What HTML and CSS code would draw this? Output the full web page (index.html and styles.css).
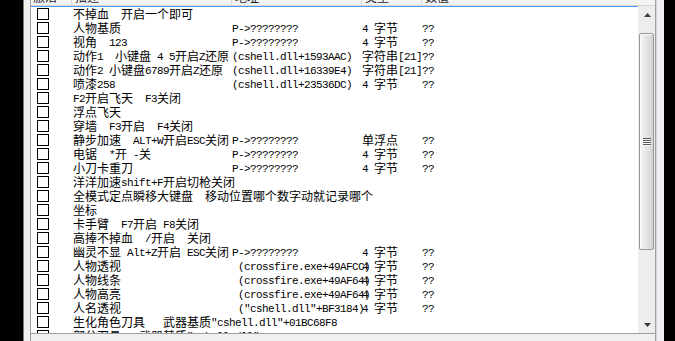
FILE: index.html
```html
<!DOCTYPE html>
<html lang="zh-CN">
<head>
<meta charset="utf-8">
<title>Cheat Table</title>
<link rel="stylesheet" href="styles.css">
</head>
<body>
<div class="screen">
  <div class="band-left"></div>
  <div class="main">
    <div class="header">
      <div class="hc hc-first"><span class="ht">激活</span></div>
      <div class="hc"><span class="ht">描述</span></div>
      <div class="hc"><span class="ht">地址</span></div>
      <div class="hc"><span class="ht">类型</span></div>
      <div class="hc hc-last"><span class="ht">数值</span></div>
    </div>
    <div class="content">
      <div class="list">
        <div class="row"><span class="cb"></span><span class="c">不掉血<span class="m">  </span>开启一个即可</span></div>
        <div class="row"><span class="cb"></span><span class="c">人物基质</span><span class="c"><span class="m">P-&gt;????????</span></span><span class="c"><span class="m">4 </span>字节</span><span class="c"><span class="m">??</span></span></div>
        <div class="row"><span class="cb"></span><span class="c">视角<span class="m">  123</span></span><span class="c"><span class="m">P-&gt;????????</span></span><span class="c"><span class="m">4 </span>字节</span><span class="c"><span class="m">??</span></span></div>
        <div class="row"><span class="cb"></span><span class="c">动作<span class="m">1  </span>小键盘<span class="m"> 4 5</span>开启<span class="m">Z</span>还原</span><span class="c"><span class="m">(cshell.dll+1593AAC)</span></span><span class="c">字符串<span class="m">[21]</span></span><span class="c"><span class="m">??</span></span></div>
        <div class="row"><span class="cb"></span><span class="c">动作<span class="m">2 </span>小键盘<span class="m">6789</span>开启<span class="m">Z</span>还原</span><span class="c"><span class="m">(cshell.dll+16339E4)</span></span><span class="c">字符串<span class="m">[21]</span></span><span class="c"><span class="m">??</span></span></div>
        <div class="row"><span class="cb"></span><span class="c">喷漆<span class="m">258</span></span><span class="c"><span class="m">(cshell.dll+23536DC)</span></span><span class="c"><span class="m">4 </span>字节</span><span class="c"><span class="m">??</span></span></div>
        <div class="row"><span class="cb"></span><span class="c"><span class="m">F2</span>开启飞天<span class="m">  F3</span>关闭</span></div>
        <div class="row"><span class="cb"></span><span class="c">浮点飞天</span></div>
        <div class="row"><span class="cb"></span><span class="c">穿墙<span class="m">  F3</span>开启<span class="m">  F4</span>关闭</span></div>
        <div class="row"><span class="cb"></span><span class="c">静步加速<span class="m">  ALT+W</span>开启<span class="m">ESC</span>关闭</span><span class="c"><span class="m">P-&gt;????????</span></span><span class="c">单浮点</span><span class="c"><span class="m">??</span></span></div>
        <div class="row"><span class="cb"></span><span class="c">电锯<span class="m">  *</span>开<span class="m"> -</span>关</span><span class="c"><span class="m">P-&gt;????????</span></span><span class="c"><span class="m">4 </span>字节</span><span class="c"><span class="m">??</span></span></div>
        <div class="row"><span class="cb"></span><span class="c">小刀卡重刀</span><span class="c"><span class="m">P-&gt;????????</span></span><span class="c"><span class="m">4 </span>字节</span><span class="c"><span class="m">??</span></span></div>
        <div class="row"><span class="cb"></span><span class="c">洋洋加速<span class="m">shift+F</span>开启切枪关闭</span></div>
        <div class="row"><span class="cb"></span><span class="c">全模式定点瞬移大键盘<span class="m">  </span>移动位置哪个数字动就记录哪个</span></div>
        <div class="row"><span class="cb"></span><span class="c">坐标</span></div>
        <div class="row"><span class="cb"></span><span class="c">卡手臂<span class="m">  F7</span>开启<span class="m"> F8</span>关闭</span></div>
        <div class="row"><span class="cb"></span><span class="c">高捧不掉血<span class="m">  /</span>开启<span class="m">  </span>关闭</span></div>
        <div class="row"><span class="cb"></span><span class="c">幽灵不显<span class="m"> Alt+Z</span>开启<span class="m"> ESC</span>关闭</span><span class="c"><span class="m">P-&gt;????????</span></span><span class="c"><span class="m">4 </span>字节</span><span class="c"><span class="m">??</span></span></div>
        <div class="row"><span class="cb"></span><span class="c">人物透视</span><span class="c"><span class="m"> (crossfire.exe+49AFCC)</span></span><span class="c"><span class="m">4 </span>字节</span><span class="c"><span class="m">??</span></span></div>
        <div class="row"><span class="cb"></span><span class="c">人物线条</span><span class="c"><span class="m"> (crossfire.exe+49AF64)</span></span><span class="c"><span class="m">4 </span>字节</span><span class="c"><span class="m">??</span></span></div>
        <div class="row"><span class="cb"></span><span class="c">人物高亮</span><span class="c"><span class="m"> (crossfire.exe+49AF64)</span></span><span class="c"><span class="m">4 </span>字节</span><span class="c"><span class="m">??</span></span></div>
        <div class="row"><span class="cb"></span><span class="c">人名透视</span><span class="c"><span class="m"> ("cshell.dll"+BF3184)</span></span><span class="c"><span class="m">4 </span>字节</span><span class="c"><span class="m">??</span></span></div>
        <div class="row"><span class="cb"></span><span class="c">生化角色刀具<span class="m">   </span>武器基质<span class="m">"cshell.dll"+01BC68F8</span></span></div>
        <div class="row"><span class="cb"></span><span class="c">部分刀具<span class="m">   </span>武器基质<span class="m">"cshell.dll"+01BC72F8</span></span></div>
      </div>
      <div class="vscroll">
        <div class="sbtn">
          <svg class="arrow" width="7" height="4" viewBox="0 0 7 4"><path d="M3.5 0L7 4H0z" fill="#3c3c3c"/></svg>
        </div>
        <div class="track">
          <div class="thumb"><span class="grip"></span></div>
        </div>
        <div class="sbtn">
          <svg class="arrow" width="7" height="4" viewBox="0 0 7 4"><path d="M0 0H7L3.5 4z" fill="#3c3c3c"/></svg>
        </div>
      </div>
    </div>
    <div class="footer"></div>
  </div>
  <div class="band-right"></div>
</div>
</body>
</html>
```

FILE: styles.css
```css
html, body {
  margin: 0;
  padding: 0;
  height: 341px;
  overflow: hidden;
  background: #000;
}

body {
  font-family: "Noto Sans CJK SC", sans-serif;
  font-size: 12px;
  color: #000;
}

.screen {
  display: flex;
  height: 341px;
  padding: 0 11px 0 23px;
  box-sizing: border-box;
}

.band-left {
  width: 8px;
  box-sizing: border-box;
  background: #f0f0f0;
  border-left: 1px solid #7c7c7c;
  border-right: 1px solid #a0a0a0;
}

.band-right {
  width: 9px;
  box-sizing: border-box;
  background: #eceef1;
  border-left: 1px solid #a0a0a0;
  box-shadow: inset 1px 0 0 #d4d4d4;
}

.main {
  width: 624px;
  display: flex;
  flex-direction: column;
  background: #f0f0f0;
}

/* column header, cut off at the top of the shot */
.header {
  height: 5px;
  border-bottom: 1px solid #d5d5d5;
  background: #f4f4f4;
  display: grid;
  grid-template-columns: 41px 160px 130px 60px 1fr;
  overflow: hidden;
}

.hc {
  border-right: 1px solid #d9d9d9;
  padding-left: 3px;
  line-height: 14px;
  white-space: nowrap;
  overflow: hidden;
}

.hc-first { padding-left: 2px; }
.hc-last { border-right: none; }

.ht {
  display: block;
  margin-top: -10px;
  color: #1b1b2a;
}

.content {
  height: 327px;
  display: flex;
}

.list {
  width: 607px;
  background: #fff;
  border-top: 1px solid #4a9df5;
  overflow: hidden;
}

.row {
  display: grid;
  grid-template-columns: 42px 159px 130px 60px 1fr;
  grid-template-rows: 14px;
  height: 14px;
  line-height: 14px;
}

.cb {
  width: 12px;
  height: 12px;
  box-sizing: border-box;
  border: 1px solid #000;
  background: #fff;
  margin: 1px 0 0 6px;
}

.c {
  white-space: pre;
}

.m {
  font-family: "Liberation Mono", monospace;
  font-size: 11px;
  letter-spacing: -0.6px;
  vertical-align: 1px;
}

/* vertical scrollbar */
.vscroll {
  width: 17px;
  display: flex;
  flex-direction: column;
  background: #ededed;
}

.sbtn {
  height: 17px;
  display: flex;
  align-items: center;
  justify-content: center;
  padding-left: 1px;
}

.arrow {
  display: block;
}

.track {
  flex: 1;
  padding: 10px 1px 0 1px;
}

.thumb {
  height: 217px;
  box-sizing: border-box;
  border: 1px solid #979797;
  border-radius: 2px;
  background: linear-gradient(to right, #f4f4f4 0%, #e8e8e8 45%, #d2d2d2 100%);
  box-shadow: inset 1px 1px 0 #fdfdfd;
  display: flex;
  align-items: center;
  justify-content: center;
}

.grip {
  display: block;
  width: 8px;
  height: 8px;
  background: repeating-linear-gradient(to bottom, #5e5e5e 0 1px, #f4f4f4 1px 2px);
}

.footer {
  flex: 1;
  border-top: 1px solid #a0a0a0;
  background: #f0f0f0;
}
```
